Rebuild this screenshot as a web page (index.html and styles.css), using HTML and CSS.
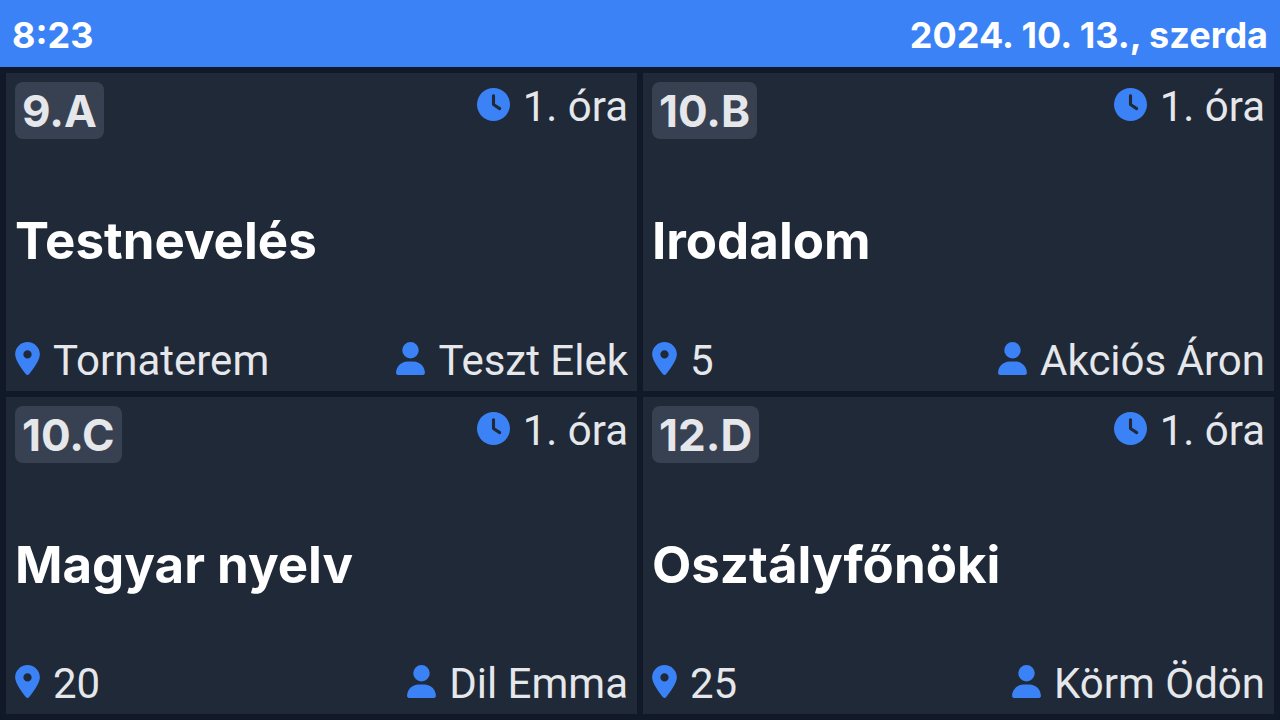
FILE: index.html
```html
<!DOCTYPE html>
<html lang="hu">
<head>
<meta charset="utf-8">
<meta name="viewport" content="width=device-width, initial-scale=1">
<title>Helyettesítések</title>
<link rel="stylesheet" href="styles.css">
</head>
<body>
<svg class="sprite" aria-hidden="true">
  <symbol id="clock" viewBox="0 0 512 512"><path d="M256 0a256 256 0 1 1 0 512A256 256 0 1 1 256 0zM232 120V256c0 8 4 15.500 10.700 20l96 64c11 7.400 25.900 4.400 33.300-6.700s4.400-25.900-6.700-33.300L280 243.200V120c0-13.300-10.700-24-24-24s-24 10.700-24 24z"/></symbol>
  <symbol id="pin" viewBox="0 0 384 512"><path d="M215.700 499.200C267 435 384 279.400 384 192C384 86 298 0 192 0S0 86 0 192c0 87.400 117 243 168.300 307.200c12.300 15.300 35.100 15.300 47.400 0zM192 128a64 64 0 1 1 0 128a64 64 0 1 1 0-128z"/></symbol>
  <symbol id="user" viewBox="0 0 448 512"><path d="M224 256A128 128 0 1 0 224 0a128 128 0 1 0 0 256zm-45.700 48C79.800 304 0 383.800 0 482.300C0 498.700 13.300 512 29.700 512H418.300c16.400 0 29.700-13.300 29.700-29.700C448 383.800 368.200 304 269.700 304H178.300z"/></symbol>
</svg>
<header class="topbar">
  <time>8:23</time>
  <time datetime="2024-10-13">2024. 10. 13., szerda</time>
</header>
<main class="board">
  <article class="card">
    <div class="row row-top"><span class="badge">9.A</span><span class="info"><svg class="icon icon-clock"><use href="#clock"/></svg>1. óra</span></div>
    <h2 class="subject">Testnevelés</h2>
    <div class="row"><span class="info"><svg class="icon icon-pin"><use href="#pin"/></svg>Tornaterem</span><span class="info"><svg class="icon icon-user"><use href="#user"/></svg>Teszt Elek</span></div>
  </article>
  <article class="card">
    <div class="row row-top"><span class="badge">10.B</span><span class="info"><svg class="icon icon-clock"><use href="#clock"/></svg>1. óra</span></div>
    <h2 class="subject">Irodalom</h2>
    <div class="row"><span class="info"><svg class="icon icon-pin"><use href="#pin"/></svg>5</span><span class="info"><svg class="icon icon-user"><use href="#user"/></svg>Akciós Áron</span></div>
  </article>
  <article class="card">
    <div class="row row-top"><span class="badge">10.C</span><span class="info"><svg class="icon icon-clock"><use href="#clock"/></svg>1. óra</span></div>
    <h2 class="subject">Magyar nyelv</h2>
    <div class="row"><span class="info"><svg class="icon icon-pin"><use href="#pin"/></svg>20</span><span class="info"><svg class="icon icon-user"><use href="#user"/></svg>Dil Emma</span></div>
  </article>
  <article class="card">
    <div class="row row-top"><span class="badge">12.D</span><span class="info"><svg class="icon icon-clock"><use href="#clock"/></svg>1. óra</span></div>
    <h2 class="subject">Osztályfőnöki</h2>
    <div class="row"><span class="info"><svg class="icon icon-pin"><use href="#pin"/></svg>25</span><span class="info"><svg class="icon icon-user"><use href="#user"/></svg>Körm Ödön</span></div>
  </article>
</main>
</body>
</html>
```
FILE: styles.css
```css
* { box-sizing: border-box; }

body {
  display: flex;
  flex-direction: column;
  min-height: 100vh;
  margin: 0;
  background: #111827;
  color: #e5e7eb;
  font-family: Inter, sans-serif;
}

.sprite { display: none; }

.topbar {
  display: flex;
  justify-content: space-between;
  padding: 14px 12px 10px;
  background: #3b82f6;
  color: #fff;
  font-size: 36px;
  font-weight: 700;
  line-height: 43px;
}

.board {
  display: grid;
  flex: 1;
  grid-template-columns: 1fr 1fr;
  grid-auto-rows: 1fr;
  gap: 6px;
  padding: 6px;
}

.card {
  display: flex;
  flex-direction: column;
  justify-content: space-between;
  padding: 9px 9px 5px;
  background: #1f2937;
}

.row {
  display: flex;
  justify-content: space-between;
  align-items: flex-start;
}

.row-top { height: 57px; }

.badge {
  padding: 2px 7px 0;
  border-radius: 8px;
  background: #374151;
  font-size: 44px;
  font-weight: 700;
  line-height: 55px;
}

.info {
  display: flex;
  align-items: baseline;
  gap: 13px;
  font-family: Roboto, sans-serif;
  font-size: 42px;
  line-height: 50px;
}

.icon { height: 33px; fill: #3b82f6; }
.icon-clock { width: 33px; }
.icon-pin { width: 25px; }
.icon-user { width: 29px; }

.subject {
  margin: 0;
  padding-top: 8px;
  color: #fff;
  font-size: 51px;
  font-weight: 700;
  line-height: 64px;
}
```
